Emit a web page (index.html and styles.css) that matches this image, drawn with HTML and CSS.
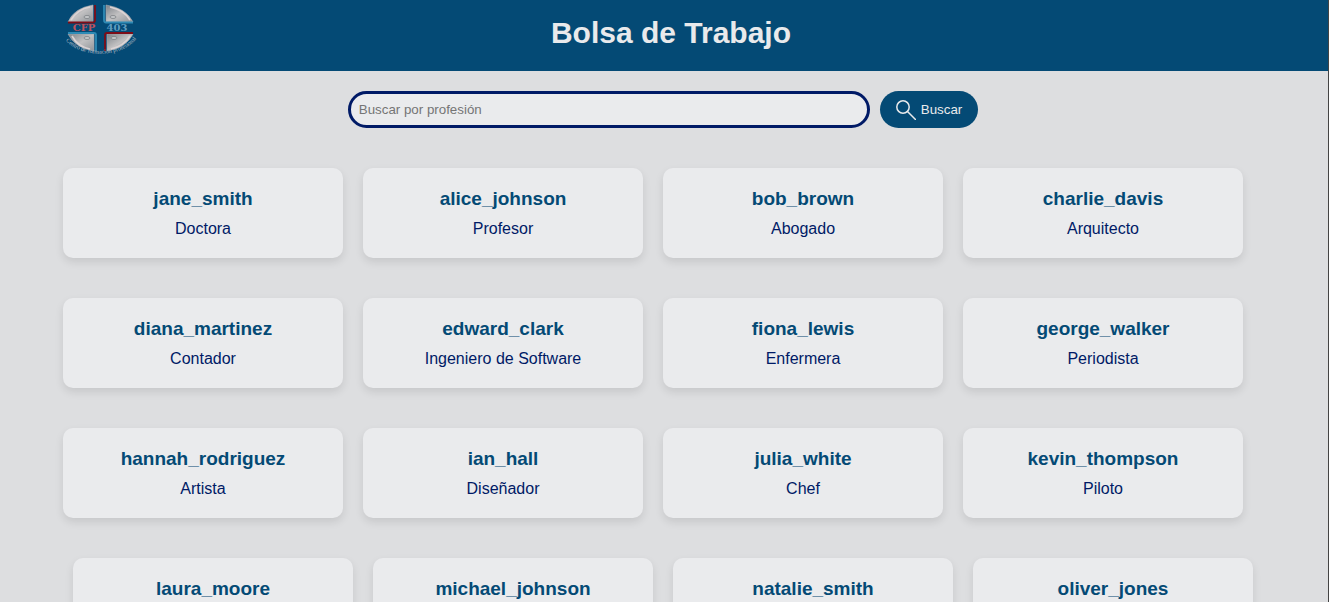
FILE: index.html
```html
<!DOCTYPE html>
<html lang="es">
<head>
<meta charset="utf-8">
<meta name="viewport" content="width=device-width, initial-scale=1">
<title>Bolsa de Trabajo</title>
<link rel="stylesheet" href="styles.css">
</head>
<body>
<header class="header">
  <div class="header-inner">
    <svg class="logo" viewBox="0 0 76 56" role="img" aria-label="CFP 403">
      <defs>
        <linearGradient id="metal" x1="0" y1="0" x2="1" y2="1">
          <stop offset="0" stop-color="#7d8288"/>
          <stop offset=".5" stop-color="#c2c1c2"/>
          <stop offset="1" stop-color="#8f9499"/>
        </linearGradient>
        <path id="arc" d="M0 36C12 60 64 60 76 34"/>
      </defs>
      <g fill="url(#metal)" stroke="#a5adb5" stroke-width=".6">
        <path d="M5 22Q11 8 30 5V22Z"/>
        <path d="M43 5Q63 8 70 22H43Z"/>
        <path d="M5 34H31V51Q12 48 5 34Z"/>
        <path d="M44 34H70Q63 48 44 51Z"/>
      </g>
      <g fill="none" stroke="#dcd4d5" stroke-width="1.6">
        <path d="M8 20Q15 9 27 7M47 7Q61 10 67 20M9 36Q15 47 27 49M48 49Q61 46 67 36"/>
      </g>
      <g fill="#c6c8ca" stroke="#666b71" stroke-width=".6">
        <ellipse cx="24" cy="17" rx="3" ry="1.5"/>
        <ellipse cx="50" cy="17" rx="3" ry="1.5"/>
        <ellipse cx="24" cy="38" rx="3" ry="1.5"/>
        <ellipse cx="51" cy="38" rx="3" ry="1.5"/>
      </g>
      <g fill="none" stroke-width="1.8">
        <path stroke="#7e0d18" d="M5 22.5H30Q32 22.5 32 20V5"/>
        <path stroke="#2e8ab5" d="M70 22.5H43Q41 22.5 41 20V5"/>
        <path stroke="#2e8ab5" d="M5 33H31Q33 33 33 35V51"/>
        <path stroke="#7e0d18" d="M70 33H44Q42 33 42 35V51"/>
      </g>
      <text class="logo-name logo-red" x="21" y="31">CFP</text>
      <text class="logo-name logo-blue" x="54" y="31">403</text>
      <text class="logo-arc"><textPath href="#arc" startOffset="50%">Centro de formación profesional</textPath></text>
    </svg>
    <h1 class="title">Bolsa de Trabajo</h1>
  </div>
</header>
<main class="main">
  <form class="search" role="search">
    <input class="search-input" type="text" placeholder="Buscar por profesión" aria-label="Buscar por profesión">
    <button class="search-button" type="button">
      <svg class="search-icon" viewBox="0 0 20 20" aria-hidden="true"><circle cx="7" cy="7" r="6.2"/><path d="M11.5 11.5L19.5 19.5"/></svg>
      Buscar
    </button>
  </form>
  <div class="list">
    <section class="row">
      <article class="card"><h2 class="name">jane_smith</h2><p class="job">Doctora</p></article>
      <article class="card"><h2 class="name">alice_johnson</h2><p class="job">Profesor</p></article>
      <article class="card"><h2 class="name">bob_brown</h2><p class="job">Abogado</p></article>
      <article class="card"><h2 class="name">charlie_davis</h2><p class="job">Arquitecto</p></article>
    </section>
    <section class="row">
      <article class="card"><h2 class="name">diana_martinez</h2><p class="job">Contador</p></article>
      <article class="card"><h2 class="name">edward_clark</h2><p class="job">Ingeniero de Software</p></article>
      <article class="card"><h2 class="name">fiona_lewis</h2><p class="job">Enfermera</p></article>
      <article class="card"><h2 class="name">george_walker</h2><p class="job">Periodista</p></article>
    </section>
    <section class="row">
      <article class="card"><h2 class="name">hannah_rodriguez</h2><p class="job">Artista</p></article>
      <article class="card"><h2 class="name">ian_hall</h2><p class="job">Diseñador</p></article>
      <article class="card"><h2 class="name">julia_white</h2><p class="job">Chef</p></article>
      <article class="card"><h2 class="name">kevin_thompson</h2><p class="job">Piloto</p></article>
    </section>
    <section class="row row-last">
      <article class="card"><h2 class="name">laura_moore</h2></article>
      <article class="card"><h2 class="name">michael_johnson</h2></article>
      <article class="card"><h2 class="name">natalie_smith</h2></article>
      <article class="card"><h2 class="name">oliver_jones</h2></article>
    </section>
  </div>
</main>
</body>
</html>
```

FILE: styles.css
```css
* {
  box-sizing: border-box;
}

body {
  margin: 0;
  border-right: 1px solid #444;
  background: #dddee0;
  color: #001a66;
  font-family: "Liberation Sans", Arial, sans-serif;
}

.header {
  padding: 0 2px 0 0;
  background: #044a75;
}

.header-inner {
  display: grid;
  grid-template-columns: 76px 1fr 60px;
  max-width: 1200px;
  min-height: 71px;
  margin: 0 auto;
}

.logo {
  width: 76px;
  height: 56px;
}

.logo-name {
  font: bold 10px "DejaVu Serif", serif;
  text-anchor: middle;
}

.logo-red {
  fill: #c0525c;
}

.logo-blue {
  fill: #5f9cc0;
}

.logo-arc {
  fill: #b3bec7;
  font: 6px "Liberation Serif", serif;
  text-anchor: middle;
}

.title {
  margin: 0;
  padding-top: 16px;
  color: #e9eaec;
  font-size: 30px;
  line-height: 34px;
  text-align: center;
}

.main {
  padding: 20px 2px 40px 0;
}

.search {
  display: flex;
  justify-content: center;
  gap: 10px;
  margin-bottom: 40px;
}

.search-input {
  width: 522px;
  height: 37px;
  padding: 8px;
  border: 3px solid #001a66;
  border-radius: 20px;
  background: #eaebed;
  color: #001a66;
  font-family: inherit;
}

.search-input::placeholder {
  color: #757575;
}

.search-button {
  display: flex;
  align-items: center;
  gap: 5px;
  height: 37px;
  padding: 0 16px;
  border: 0;
  border-radius: 20px;
  background: #044a75;
  color: #e9eaec;
  font-family: inherit;
}

.search-icon {
  width: 20px;
  height: 20px;
  fill: none;
  stroke: #e9eaec;
  stroke-width: 1.5;
  stroke-linecap: round;
}

.list {
  display: grid;
  gap: 40px;
  max-width: 1200px;
  margin: 0 auto;
}

.row {
  display: grid;
  grid-template-columns: repeat(4, 1fr);
  gap: 20px;
  padding-right: 20px;
}

.row-last {
  padding: 0 10px;
}

.card {
  min-height: 90px;
  padding: 20px;
  border-radius: 10px;
  background: #eaebed;
  box-shadow: 0 4px 8px rgba(0, 0, 0, 0.1);
  text-align: center;
}

.name {
  margin: 0;
  color: #044a75;
  font-size: 19px;
  line-height: 22px;
}

.job {
  margin: 10px 0 0;
  font-size: 16px;
  line-height: 18px;
}
```
